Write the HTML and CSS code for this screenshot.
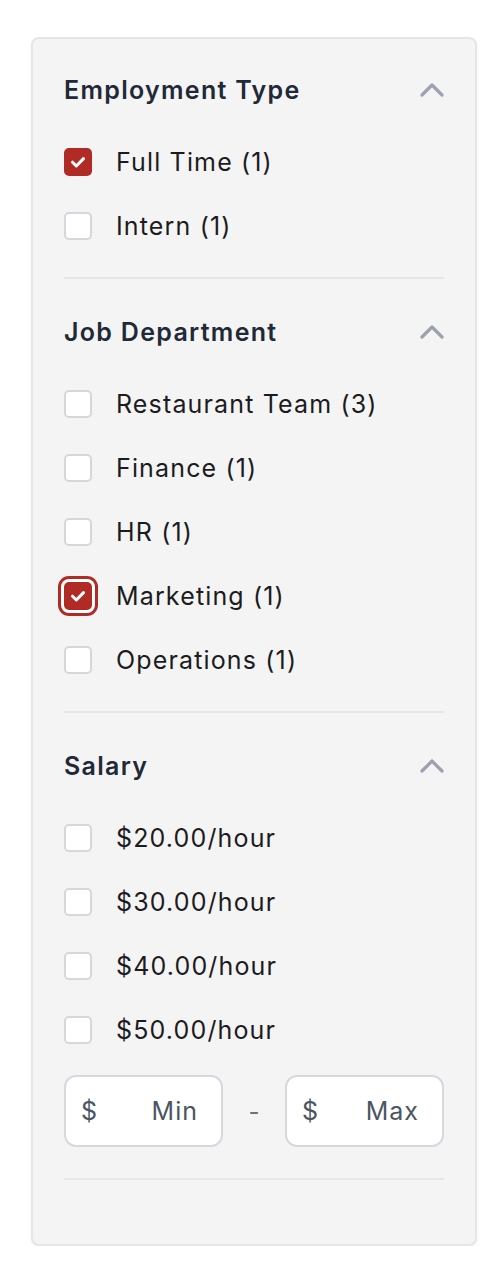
FILE: index.html
```html
<!DOCTYPE html>
<html lang="en">
<head>
<meta charset="utf-8">
<title>Filters</title>
<link rel="stylesheet" href="styles.css">
</head>
<body>
<aside class="card">
  <section class="group">
    <div class="group-head">
      <h3 class="group-title">Employment Type</h3>
      <svg class="chev" width="24" height="14" viewBox="0 0 24 14"><path d="M2 12 L12 2 L22 12" fill="none" stroke="currentColor" stroke-width="3.2" stroke-linecap="round" stroke-linejoin="round"/></svg>
    </div>
    <ul class="opts">
      <li class="opt"><span class="box checked"><svg width="28" height="28" viewBox="0 0 28 28"><path d="M8.5 14.2 L12.3 18 L19.5 10.6" fill="none" stroke="#fff" stroke-width="3" stroke-linecap="round" stroke-linejoin="round"/></svg></span><span class="lbl">Full Time (1)</span></li>
      <li class="opt"><span class="box"></span><span class="lbl">Intern (1)</span></li>
    </ul>
  </section>
  <section class="group">
    <div class="group-head">
      <h3 class="group-title">Job Department</h3>
      <svg class="chev" width="24" height="14" viewBox="0 0 24 14"><path d="M2 12 L12 2 L22 12" fill="none" stroke="currentColor" stroke-width="3.2" stroke-linecap="round" stroke-linejoin="round"/></svg>
    </div>
    <ul class="opts">
      <li class="opt"><span class="box"></span><span class="lbl">Restaurant Team (3)</span></li>
      <li class="opt"><span class="box"></span><span class="lbl">Finance (1)</span></li>
      <li class="opt"><span class="box"></span><span class="lbl">HR (1)</span></li>
      <li class="opt"><span class="box checked focus"><svg width="28" height="28" viewBox="0 0 28 28"><path d="M8.5 14.2 L12.3 18 L19.5 10.6" fill="none" stroke="#fff" stroke-width="3" stroke-linecap="round" stroke-linejoin="round"/></svg></span><span class="lbl">Marketing (1)</span></li>
      <li class="opt"><span class="box"></span><span class="lbl">Operations (1)</span></li>
    </ul>
  </section>
  <section class="group">
    <div class="group-head">
      <h3 class="group-title">Salary</h3>
      <svg class="chev" width="24" height="14" viewBox="0 0 24 14"><path d="M2 12 L12 2 L22 12" fill="none" stroke="currentColor" stroke-width="3.2" stroke-linecap="round" stroke-linejoin="round"/></svg>
    </div>
    <ul class="opts">
      <li class="opt"><span class="box"></span><span class="lbl">$20.00/hour</span></li>
      <li class="opt"><span class="box"></span><span class="lbl">$30.00/hour</span></li>
      <li class="opt"><span class="box"></span><span class="lbl">$40.00/hour</span></li>
      <li class="opt"><span class="box"></span><span class="lbl">$50.00/hour</span></li>
      <li class="range">
        <div class="field"><span class="cur">$</span><span class="ph">Min</span></div>
        <span class="dash">-</span>
        <div class="field"><span class="cur">$</span><span class="ph">Max</span></div>
      </li>
    </ul>
  </section>
</aside>
</body>
</html>
```
FILE: styles.css
```css
* { box-sizing: border-box; }
html, body { margin: 0; padding: 0; background: #ffffff; }
body {
  font-family: Inter, "Noto Sans", "Liberation Sans", sans-serif;
  padding: 37px 19px 0 31px;
}
.card {
  width: 446px;
  background: #f4f4f5;
  border: 2px solid #e6e6ea;
  border-radius: 8px;
  box-shadow: 0 1px 3px rgba(0,0,0,0.06);
  padding: 35px 31px 64px 31px;
}
.group {
  border-bottom: 2px solid #e5e6ea;
  padding-top: 37px;
  padding-bottom: 31px;
}
.group:first-child { padding-top: 0; }
.group-head {
  height: 32px;
  display: flex;
  align-items: center;
  justify-content: space-between;
}
.group-title {
  margin: 0;
  font-size: 25px;
  font-weight: 600;
  color: #1f2937;
  line-height: 33px;
  letter-spacing: 1.3px;
}
.chev { color: #9ca3af; display: block; }
.opts {
  list-style: none;
  margin: 36px 0 0 0;
  padding: 0;
  display: flex;
  flex-direction: column;
  gap: 24px;
}
.opt {
  height: 40px;
  display: flex;
  align-items: center;
  gap: 24px;
}
.box {
  width: 28px;
  height: 28px;
  flex: none;
  background: #ffffff;
  border: 2px solid #d5d7dc;
  border-radius: 5px;
  display: flex;
  align-items: center;
  justify-content: center;
}
.box svg { display: block; flex: none; }
.box.checked { background: #b02a26; border-color: #b02a26; }
.box.focus { box-shadow: 0 0 0 3px #ffffff, 0 0 0 6px #b02a26; }
.lbl {
  font-size: 25px;
  color: #1c1c1e;
  line-height: 34px;
  letter-spacing: 1.15px;
}
.range {
  display: flex;
  align-items: center;
  margin-top: 1px;
}
.field {
  flex: 1;
  height: 72px;
  background: #ffffff;
  border: 2px solid #d6d8dd;
  border-radius: 12px;
  display: flex;
  align-items: center;
  justify-content: space-between;
  padding: 0 23px 0 15px;
  font-size: 25px;
  color: #4b5563;
  letter-spacing: 1px;
}
.dash {
  width: 62px;
  text-align: center;
  font-size: 24px;
  color: #6b7280;
}
```
